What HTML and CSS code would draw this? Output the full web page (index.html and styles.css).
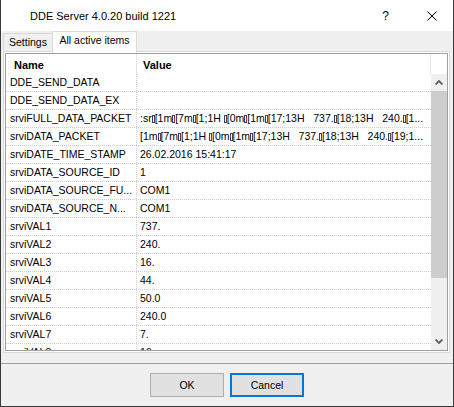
FILE: index.html
```html
<!DOCTYPE html>
<html>
<head>
<meta charset="utf-8">
<title>DDE Server</title>
<link rel="stylesheet" href="styles.css">
</head>
<body>
<div class="window">
  <div class="titlebar">
    <div class="title">DDE Server 4.0.20 build 1221</div>
    <div class="cap-btn help">?</div>
    <div class="cap-btn close">
      <svg width="10" height="10" viewBox="0 0 10 10"><path d="M0.5 0.5 L9.5 9.5 M9.5 0.5 L0.5 9.5" stroke="#000" stroke-width="1" fill="none"/></svg>
    </div>
  </div>
  <div class="tabstrip">
    <div class="tab">Settings</div>
    <div class="tab active">All active items</div>
  </div>
  <div class="panel">
    <div class="list">
      <div class="header">
        <div class="hcell hname">Name</div>
        <div class="hcell hvalue">Value</div>
        <div class="hrest"></div>
      </div>
      <div class="lbody">
        <div class="rows">
          <div class="row"><div class="cname">DDE_SEND_DATA</div><div class="cvalue"></div></div>
          <div class="row"><div class="cname">DDE_SEND_DATA_EX</div><div class="cvalue"></div></div>
          <div class="row"><div class="cname">srviFULL_DATA_PACKET</div><div class="cvalue">:sr<span class="cc"></span>[1m<span class="cc"></span>[7m<span class="cc"></span>[1;1H <span class="cc"></span>[0m<span class="cc"></span>[1m<span class="cc"></span>[17;13H   737.<span class="cc"></span>[18;13H   240.<span class="cc"></span>[1...</div></div>
          <div class="row"><div class="cname">srviDATA_PACKET</div><div class="cvalue">[1m<span class="cc"></span>[7m<span class="cc"></span>[1;1H <span class="cc"></span>[0m<span class="cc"></span>[1m<span class="cc"></span>[17;13H   737.<span class="cc"></span>[18;13H   240.<span class="cc"></span>[19;1...</div></div>
          <div class="row"><div class="cname">srviDATE_TIME_STAMP</div><div class="cvalue">26.02.2016 15:41:17</div></div>
          <div class="row"><div class="cname">srviDATA_SOURCE_ID</div><div class="cvalue">1</div></div>
          <div class="row"><div class="cname">srviDATA_SOURCE_FU...</div><div class="cvalue">COM1</div></div>
          <div class="row"><div class="cname">srviDATA_SOURCE_N...</div><div class="cvalue">COM1</div></div>
          <div class="row"><div class="cname">srviVAL1</div><div class="cvalue">737.</div></div>
          <div class="row"><div class="cname">srviVAL2</div><div class="cvalue">240.</div></div>
          <div class="row"><div class="cname">srviVAL3</div><div class="cvalue">16.</div></div>
          <div class="row"><div class="cname">srviVAL4</div><div class="cvalue">44.</div></div>
          <div class="row"><div class="cname">srviVAL5</div><div class="cvalue">50.0</div></div>
          <div class="row"><div class="cname">srviVAL6</div><div class="cvalue">240.0</div></div>
          <div class="row"><div class="cname">srviVAL7</div><div class="cvalue">7.</div></div>
          <div class="row"><div class="cname">srviVAL8</div><div class="cvalue">16.</div></div>
        </div>
        <div class="vscroll">
          <div class="sbtn">
            <svg width="8" height="5" viewBox="0 0 8 5"><path d="M0.5 4.5 L4 1 L7.5 4.5" stroke="#606060" stroke-width="1.8" fill="none"/></svg>
          </div>
          <div class="thumb"></div>
          <div class="track"></div>
          <div class="sbtn">
            <svg width="8" height="5" viewBox="0 0 8 5"><path d="M0.5 0.5 L4 4 L7.5 0.5" stroke="#606060" stroke-width="1.8" fill="none"/></svg>
          </div>
        </div>
      </div>
    </div>
  </div>
  <div class="sep"></div>
  <div class="buttons">
    <div class="btn">OK</div>
    <div class="btn focused">Cancel</div>
  </div>
</div>
</body>
</html>
```

FILE: styles.css
```css
* { box-sizing: border-box; }
html, body { margin: 0; padding: 0; }
body {
  width: 454px;
  height: 407px;
  overflow: hidden;
  background: #f0f0f0;
  font-family: "Liberation Sans", Arial, sans-serif;
  font-size: 10.5px;
  color: #000;
}
.window {
  width: 454px;
  height: 407px;
  border: 1px solid #3a3a3a;
  border-top: none;
  background: #f0f0f0;
  display: flex;
  flex-direction: column;
}
.titlebar {
  height: 31px;
  flex: none;
  background: #fff;
  display: flex;
  align-items: center;
}
.title {
  flex: 1;
  margin-left: 29px;
  font-size: 11px;
  padding-top: 1px;
}
.cap-btn {
  width: 45px;
  height: 31px;
  display: flex;
  align-items: center;
  justify-content: center;
}
.help { font-size: 12px; padding-top: 1px; }
.close { padding-left: 2px; padding-top: 1px; }
.close svg { display: block; }

.tabstrip {
  height: 20px;
  flex: none;
  display: flex;
  align-items: flex-end;
  padding-left: 2px;
}
.tab {
  height: 18px;
  width: 49px;
  border-left: 1px solid #d9d9d9;
  border-top: 1px solid #d9d9d9;
  background: #f0f0f0;
  text-align: center;
  line-height: 17px;
}
.tab.active {
  position: relative;
  z-index: 1;
  width: 85px;
  height: 22px;
  margin-bottom: -2px;
  border: 1px solid #d9d9d9;
  border-bottom: none;
  background: #fff;
  line-height: 17px;
}
.panel {
  flex: none;
  margin-left: 2px;
  width: 447px;
  height: 302px;
  border: 1px solid #d9d9d9;
  background: #fff;
  padding: 1px;
}
.list {
  height: 100%;
  border: 1px solid #a0a0a0;
  background: #fff;
  display: flex;
  flex-direction: column;
}
.header {
  height: 20px;
  flex: none;
  display: flex;
  font-weight: bold;
  font-size: 11px;
}
.hcell {
  border-right: 1px solid #e5e5e5;
  padding-top: 3px;
  line-height: 17px;
  white-space: nowrap;
}
.hname { width: 131px; padding-left: 8px; }
.hvalue { width: 294px; padding-left: 6px; }
.hrest { flex: 1; }
.lbody {
  flex: 1;
  display: flex;
  min-height: 0;
}
.rows {
  width: 425px;
  overflow: hidden;
}
.row {
  height: 18px;
  display: flex;
  border-bottom: 1px dotted #cfcfcf;
  line-height: 17px;
}
.cname {
  width: 131px;
  flex: none;
  padding-left: 4px;
  border-right: 1px dotted #cfcfcf;
  white-space: nowrap;
  overflow: hidden;
}
.cvalue {
  flex: 1;
  min-width: 0;
  padding-left: 3px;
  padding-right: 1px;
  white-space: pre;
  overflow: hidden;
}
.cc {
  display: inline-block;
  width: 3px;
  height: 8px;
  border: 1px solid #3c3c6a;
  border-right-color: #6a3c3c;
  vertical-align: -1px;
}
.vscroll {
  width: 16px;
  flex: none;
  background: #f0f0f0;
  display: flex;
  flex-direction: column;
}
.sbtn {
  height: 17px;
  flex: none;
  display: flex;
  align-items: center;
  justify-content: center;
}
.sbtn svg { display: block; }
.thumb {
  height: 187px;
  flex: none;
  background: #cdcdcd;
}
.track { flex: 1; }

.sep {
  flex: none;
  margin-top: 10px;
  height: 1px;
  background: #a0a0a0;
}
.buttons {
  flex: 1;
  display: flex;
  justify-content: center;
  align-items: flex-start;
  gap: 6px;
  padding-top: 9px;
}
.btn {
  width: 74px;
  height: 24px;
  background: #e1e1e1;
  border: 1px solid #adadad;
  display: flex;
  align-items: center;
  justify-content: center;
}
.btn.focused {
  border: 2px solid #0078d7;
}
```
